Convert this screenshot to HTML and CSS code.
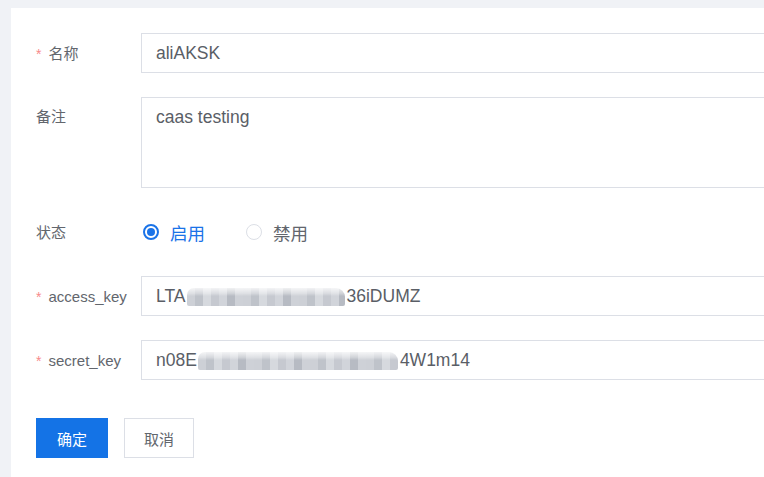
FILE: index.html
```html
<!DOCTYPE html>
<html lang="zh">
<head>
<meta charset="utf-8">
<link rel="stylesheet" href="styles.css">
</head>
<body>
<div class="panel">
  <form class="form">
    <div class="row">
      <label class="label"><span class="req">*</span>名称</label>
      <div class="control"><div class="input">aliAKSK</div></div>
    </div>
    <div class="row row-top">
      <label class="label label-top">备注</label>
      <div class="control"><div class="input textarea">caas testing</div></div>
    </div>
    <div class="row">
      <label class="label">状态</label>
      <div class="control radios">
        <span class="radio checked"><span class="dot"></span><span class="rtext">启用</span></span>
        <span class="radio"><span class="dot"></span><span class="rtext">禁用</span></span>
      </div>
    </div>
    <div class="row">
      <label class="label"><span class="req">*</span>access_key</label>
      <div class="control"><div class="input">LTA<span class="mosaic m1"></span>36iDUMZ</div></div>
    </div>
    <div class="row">
      <label class="label"><span class="req">*</span>secret_key</label>
      <div class="control"><div class="input">n08E<span class="mosaic m2"></span>4W1m14</div></div>
    </div>
    <div class="actions">
      <button type="button" class="btn primary">确定</button>
      <button type="button" class="btn">取消</button>
    </div>
  </form>
</div>
</body>
</html>
```
FILE: styles.css
```css
html, body {
  margin: 0;
  padding: 0;
  background: #f0f2f6;
  height: 100%;
  overflow: hidden;
}
body {
  font-family: "Liberation Sans", "Noto Sans CJK SC", sans-serif;
  color: #606266;
}
.panel {
  margin: 8px 0 0 11px;
  background: #ffffff;
  height: calc(100% - 8px);
  padding: 25px 0 0 25px;
  box-sizing: border-box;
}
.form {
  display: flex;
  flex-direction: column;
  gap: 24px;
}
.row {
  display: flex;
  align-items: center;
  height: 40px;
}
.row-top {
  align-items: flex-start;
  height: auto;
}
.label {
  width: 105px;
  flex: none;
  font-size: 15px;
  color: #62666d;
  line-height: 42px;
  height: 40px;
}
.label-top {
  line-height: 40px;
}
.req {
  color: #f78a8a;
  margin-right: 7px;
  font-size: 14px;
}
.control {
  flex: 1;
  min-width: 0;
}
.input {
  height: 40px;
  box-sizing: border-box;
  border: 1px solid #dcdfe6;
  border-right: none;
  padding: 0 14px;
  font-size: 17.5px;
  line-height: 38px;
  color: #5a5e66;
  white-space: nowrap;
  display: flex;
  align-items: center;
}
.textarea {
  height: 91px;
  align-items: flex-start;
  padding-top: 7px;
  line-height: 24px;
}
.radios {
  display: flex;
  align-items: center;
  gap: 41px;
  height: 40px;
  padding-left: 2px;
}
.radio {
  display: flex;
  align-items: center;
  gap: 11px;
  font-size: 17.5px;
  color: #62666d;
}
.dot {
  width: 16px;
  height: 16px;
  box-sizing: border-box;
  border-radius: 50%;
  border: 1px solid #dcdfe6;
  background: #fff;
  position: relative;
}
.checked .dot {
  border: 2px solid #1a73e8;
}
.checked .dot::after {
  content: "";
  position: absolute;
  left: 2px;
  top: 2px;
  width: 8px;
  height: 8px;
  border-radius: 50%;
  background: #1a73e8;
}
.checked .rtext {
  color: #1a73e8;
}
.mosaic {
  display: inline-block;
  height: 18px;
  border-radius: 7px 9px 2px 2px;
  background:
    linear-gradient(180deg, rgba(255,255,255,0.8) 0, rgba(255,255,255,0.35) 30%, rgba(255,255,255,0) 45%),
    repeating-linear-gradient(90deg, #cdd0d6 0 8px, #bfc3ca 8px 16px, #d6d9de 16px 24px, #c6c9d0 24px 32px, #d1d4da 32px 40px, #b7bbc3 40px 48px, #ced1d7 48px 56px);
}
.m1 {
  width: 158px;
  margin: 2px 2px 0 1px;
}
.m2 {
  width: 200px;
  margin: 2px 2px 0 1px;
}
.actions {
  display: flex;
  gap: 16px;
  margin-top: 14px;
}
.btn {
  height: 40px;
  padding: 0 19px;
  font-family: "Noto Sans CJK SC", sans-serif;
  font-size: 15px;
  border: 1px solid #dcdfe6;
  background: #fff;
  color: #62666d;
  border-radius: 0;
}
.primary {
  background: #1473e6;
  border-color: #1473e6;
  color: #fff;
  padding: 0 20px;
}
```
